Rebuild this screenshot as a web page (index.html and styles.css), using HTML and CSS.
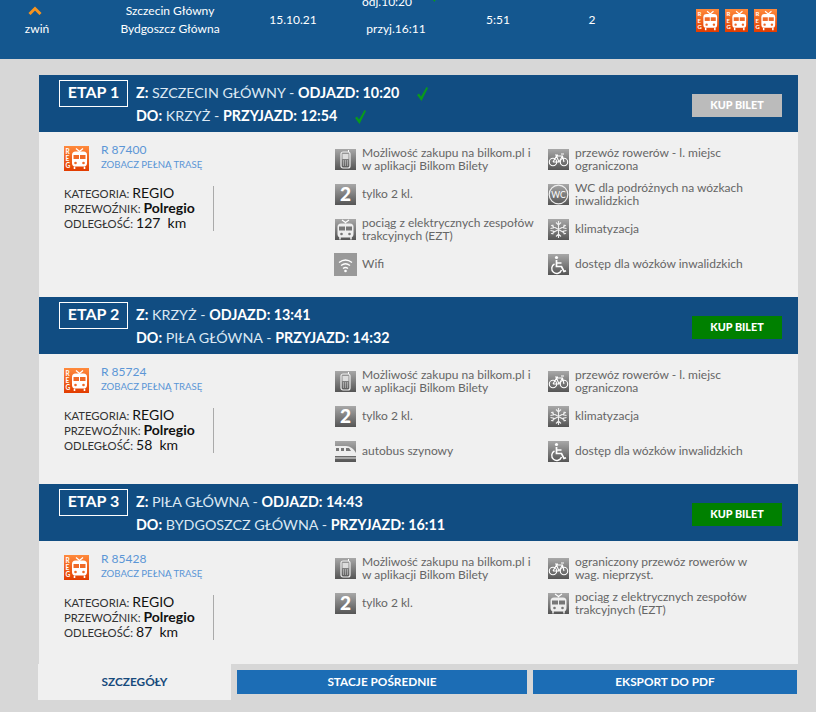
FILE: index.html
```html
<!DOCTYPE html>
<html lang="pl">
<head>
    <meta charset="UTF-8">
    <title>Szczegóły połączenia</title>
    <link rel="stylesheet" href="styles.css">
</head>
<body>
    <!-- shared icons -->
    <svg class="icon-defs" width="0" height="0">
        <defs>
            <linearGradient id="grey" x1="0" y1="0" x2="0" y2="1">
                <stop offset="0" stop-color="#a8a8a8"/>
                <stop offset="1" stop-color="#555"/>
            </linearGradient>
            <linearGradient id="orange" x1="0" y1="0" x2="0" y2="1">
                <stop offset="0" stop-color="#ff8a3c"/>
                <stop offset="1" stop-color="#e23c00"/>
            </linearGradient>
            <symbol id="i-reg" viewBox="0 0 25 25">
                <rect width="25" height="25" fill="url(#orange)"/>
                <text x="1.500" y="8" class="reg-letter">R</text>
                <text x="1.500" y="15" class="reg-letter">E</text>
                <text x="1.500" y="22" class="reg-letter">G</text>
                <path d="M12 2.500l3.500 3 3.500-3" fill="none" stroke="#fff" stroke-width="1.300"/>
                <rect x="8" y="5.500" width="15" height="15" rx="3.500" fill="#fff"/>
                <rect x="9.500" y="9" width="5.500" height="4" fill="#f06a28"/>
                <rect x="16" y="9" width="5.500" height="4" fill="#f06a28"/>
                <circle cx="11.500" cy="17" r="1.300" fill="#f06a28"/>
                <circle cx="19.500" cy="17" r="1.300" fill="#f06a28"/>
                <path d="M10.500 20.500v2.500M20.500 20.500v2.500" stroke="#fff" stroke-width="1.600"/>
            </symbol>
            <symbol id="i-phone" viewBox="0 0 21 21">
                <rect width="21" height="21" fill="url(#grey)"/>
                <path d="M13.500 1v2" stroke="#fff" stroke-width="1"/>
                <rect x="6" y="3" width="9" height="16" rx="2" fill="none" stroke="#eee" stroke-width="1.200"/>
                <rect x="7.500" y="5" width="6" height="5" fill="#ddd"/>
                <path d="M8 12h5M8 14h5M8 16h5" stroke="#ddd" stroke-width="1" stroke-dasharray="1 1"/>
            </symbol>
            <symbol id="i-two" viewBox="0 0 21 21">
                <rect width="21" height="21" fill="url(#grey)"/>
                <text x="10.500" y="17" class="two-digit">2</text>
            </symbol>
            <symbol id="i-ezt" viewBox="0 0 21 21">
                <rect width="21" height="21" fill="url(#grey)"/>
                <path d="M7 1l3.500 2.500L14 1M10.500 3.500v1" fill="none" stroke="#fff" stroke-width="1.100"/>
                <rect x="2.500" y="4.500" width="16" height="14" rx="3.500" fill="#eee"/>
                <rect x="4" y="7.500" width="6" height="4" fill="#777"/>
                <rect x="11" y="7.500" width="6" height="4" fill="#777"/>
                <circle cx="6.500" cy="15" r="1.300" fill="#777"/>
                <circle cx="14.500" cy="15" r="1.300" fill="#777"/>
                <path d="M5 18v2.500M16 18v2.500" stroke="#eee" stroke-width="1.500"/>
            </symbol>
            <symbol id="i-wifi" viewBox="0 0 23 23">
                <rect width="23" height="23" fill="#999"/>
                <path d="M5 9.500q6.500-5 13 0M7 12.500q4.500-3.500 9 0M9 15.500q2.500-2 5 0" fill="none" stroke="#fff" stroke-width="1.300"/>
                <circle cx="11.500" cy="18" r="1.300" fill="#fff"/>
            </symbol>
            <symbol id="i-bike" viewBox="0 0 21 21">
                <rect width="21" height="21" fill="url(#grey)"/>
                <circle cx="5" cy="13" r="3.700" fill="none" stroke="#fff" stroke-width="1.100"/>
                <circle cx="16" cy="13" r="3.700" fill="none" stroke="#fff" stroke-width="1.100"/>
                <path d="M5 13l3.500-6h6L16 13M8.500 7l2.500 6H5M14.500 7L11 13M7 6h3M13 5h3" fill="none" stroke="#fff" stroke-width="1.100"/>
            </symbol>
            <symbol id="i-wc" viewBox="0 0 21 21">
                <rect width="21" height="21" fill="url(#grey)"/>
                <circle cx="10.500" cy="10.500" r="9.300" fill="none" stroke="#eee" stroke-width="1.200"/>
                <text x="10.500" y="13.500" class="wc-text">WC</text>
            </symbol>
            <symbol id="i-snow" viewBox="0 0 21 21">
                <rect width="21" height="21" fill="url(#grey)"/>
                <path d="M10.500 2v17M3.100 6.200l14.800 8.600M3.100 14.800l14.800-8.600M8 3.500l2.500 2.500L13 3.500M8 17.500l2.500-2.500 2.500 2.500M2.500 9.500l3.200-.7-1-3.200M18.500 11.500l-3.200.7 1 3.200M2.500 11.500l3.200.7-1 3.200M18.500 9.500l-3.200-.7 1-3.200" fill="none" stroke="#eee" stroke-width="1.100"/>
            </symbol>
            <symbol id="i-chair" viewBox="0 0 21 21">
                <rect width="21" height="21" fill="url(#grey)"/>
                <circle cx="8.500" cy="3.500" r="1.600" fill="#fff"/>
                <path d="M8.500 6v6.500h5l2.500 5 2-.8M8.500 9h5" fill="none" stroke="#fff" stroke-width="1.700"/>
                <path d="M6.500 10a5 5 0 1 0 7 6" fill="none" stroke="#fff" stroke-width="1.400"/>
            </symbol>
            <symbol id="i-bus" viewBox="0 0 21 21">
                <rect width="21" height="21" fill="url(#grey)"/>
                <path d="M0 5h11c4 0 8 3 10 7v3H0z" fill="#eee"/>
                <path d="M1 7h3v3H1zM6 7h3v3H6zM11 7h3l2 3h-5z" fill="#777"/>
                <path d="M0 17h21" stroke="#eee" stroke-width="1"/>
            </symbol>
            <symbol id="i-check" viewBox="0 0 11 14">
                <path d="M0 8l2-1.500 2 3L9.500 0 11 1 4.500 14z" fill="#0a9a1c"/>
            </symbol>
        </defs>
    </svg>

    <div class="summary">
        <div class="toggle">
            <svg class="chevron" viewBox="0 0 14 9"><path d="M1.500 8L7 2.500 12.500 8" fill="none" stroke="#f7931e" stroke-width="3"/></svg>
            <span>zwiń</span>
        </div>
        <div class="stations">
            <div>Szczecin Główny</div>
            <div>Bydgoszcz Główna</div>
        </div>
        <div class="cell">15.10.21</div>
        <div class="times">
            <div class="dep">odj.10:20<svg class="check top-check"><use href="#i-check"/></svg></div>
            <div class="arr">przyj.16:11</div>
        </div>
        <div class="cell">5:51</div>
        <div class="cell">2</div>
        <div class="trains">
            <svg class="train-small"><use href="#i-reg"/></svg>
            <svg class="train-small"><use href="#i-reg"/></svg>
            <svg class="train-small"><use href="#i-reg"/></svg>
        </div>
    </div>

    <div class="panel">
        <section>
            <div class="leg-head">
                <div class="leg-no">ETAP 1</div>
                <div class="route">
                    <div><b>Z:</b> SZCZECIN GŁÓWNY - <b>ODJAZD: 10:20</b><svg class="check"><use href="#i-check"/></svg></div>
                    <div><b>DO:</b> KRZYŻ - <b>PRZYJAZD: 12:54</b><svg class="check"><use href="#i-check"/></svg></div>
                </div>
                <a class="buy buy-off">KUP BILET</a>
            </div>
            <div class="leg-body">
                <div class="leg-info">
                    <div class="train-line">
                        <svg class="train-icon"><use href="#i-reg"/></svg>
                        <div class="train-text">
                            <div class="train-no">R 87400</div>
                            <div class="train-link">ZOBACZ PEŁNĄ TRASĘ</div>
                        </div>
                    </div>
                    <div class="stats">
                        <div>KATEGORIA: <span class="val">REGIO</span></div>
                        <div>PRZEWOŹNIK: <span class="val"><b>Polregio</b></span></div>
                        <div>ODLEGŁOŚĆ: <span class="val">127&nbsp; km</span></div>
                    </div>
                </div>
                <div class="features">
                    <div class="feature"><svg class="ficon"><use href="#i-phone"/></svg><span>Możliwość zakupu na bilkom.pl i w aplikacji Bilkom Bilety</span></div>
                    <div class="feature"><svg class="ficon"><use href="#i-bike"/></svg><span>przewóz rowerów - l. miejsc ograniczona</span></div>
                    <div class="feature"><svg class="ficon"><use href="#i-two"/></svg><span>tylko 2 kl.</span></div>
                    <div class="feature"><svg class="ficon"><use href="#i-wc"/></svg><span>WC dla podróżnych na wózkach inwalidzkich</span></div>
                    <div class="feature"><svg class="ficon"><use href="#i-ezt"/></svg><span>pociąg z elektrycznych zespołów trakcyjnych (EZT)</span></div>
                    <div class="feature"><svg class="ficon"><use href="#i-snow"/></svg><span>klimatyzacja</span></div>
                    <div class="feature"><svg class="ficon ficon-wide"><use href="#i-wifi"/></svg><span>Wifi</span></div>
                    <div class="feature"><svg class="ficon"><use href="#i-chair"/></svg><span>dostęp dla wózków inwalidzkich</span></div>
                </div>
            </div>
        </section>

        <section>
            <div class="leg-head">
                <div class="leg-no">ETAP 2</div>
                <div class="route">
                    <div><b>Z:</b> KRZYŻ - <b>ODJAZD: 13:41</b></div>
                    <div><b>DO:</b> PIŁA GŁÓWNA - <b>PRZYJAZD: 14:32</b></div>
                </div>
                <a class="buy">KUP BILET</a>
            </div>
            <div class="leg-body">
                <div class="leg-info">
                    <div class="train-line">
                        <svg class="train-icon"><use href="#i-reg"/></svg>
                        <div class="train-text">
                            <div class="train-no">R 85724</div>
                            <div class="train-link">ZOBACZ PEŁNĄ TRASĘ</div>
                        </div>
                    </div>
                    <div class="stats">
                        <div>KATEGORIA: <span class="val">REGIO</span></div>
                        <div>PRZEWOŹNIK: <span class="val"><b>Polregio</b></span></div>
                        <div>ODLEGŁOŚĆ: <span class="val">58&nbsp; km</span></div>
                    </div>
                </div>
                <div class="features">
                    <div class="feature"><svg class="ficon"><use href="#i-phone"/></svg><span>Możliwość zakupu na bilkom.pl i w aplikacji Bilkom Bilety</span></div>
                    <div class="feature"><svg class="ficon"><use href="#i-bike"/></svg><span>przewóz rowerów - l. miejsc ograniczona</span></div>
                    <div class="feature"><svg class="ficon"><use href="#i-two"/></svg><span>tylko 2 kl.</span></div>
                    <div class="feature"><svg class="ficon"><use href="#i-snow"/></svg><span>klimatyzacja</span></div>
                    <div class="feature"><svg class="ficon"><use href="#i-bus"/></svg><span>autobus szynowy</span></div>
                    <div class="feature"><svg class="ficon"><use href="#i-chair"/></svg><span>dostęp dla wózków inwalidzkich</span></div>
                </div>
            </div>
        </section>

        <section>
            <div class="leg-head">
                <div class="leg-no">ETAP 3</div>
                <div class="route">
                    <div><b>Z:</b> PIŁA GŁÓWNA - <b>ODJAZD: 14:43</b></div>
                    <div><b>DO:</b> BYDGOSZCZ GŁÓWNA - <b>PRZYJAZD: 16:11</b></div>
                </div>
                <a class="buy">KUP BILET</a>
            </div>
            <div class="leg-body">
                <div class="leg-info">
                    <div class="train-line">
                        <svg class="train-icon"><use href="#i-reg"/></svg>
                        <div class="train-text">
                            <div class="train-no">R 85428</div>
                            <div class="train-link">ZOBACZ PEŁNĄ TRASĘ</div>
                        </div>
                    </div>
                    <div class="stats">
                        <div>KATEGORIA: <span class="val">REGIO</span></div>
                        <div>PRZEWOŹNIK: <span class="val"><b>Polregio</b></span></div>
                        <div>ODLEGŁOŚĆ: <span class="val">87&nbsp; km</span></div>
                    </div>
                </div>
                <div class="features">
                    <div class="feature"><svg class="ficon"><use href="#i-phone"/></svg><span>Możliwość zakupu na bilkom.pl i w aplikacji Bilkom Bilety</span></div>
                    <div class="feature"><svg class="ficon"><use href="#i-bike"/></svg><span>ograniczony przewóz rowerów w wag. nieprzyst.</span></div>
                    <div class="feature"><svg class="ficon"><use href="#i-two"/></svg><span>tylko 2 kl.</span></div>
                    <div class="feature"><svg class="ficon"><use href="#i-ezt"/></svg><span>pociąg z elektrycznych zespołów trakcyjnych (EZT)</span></div>
                </div>
            </div>
        </section>
    </div>

    <div class="tabs">
        <div class="tab tab-active">SZCZEGÓŁY</div>
        <div class="tab tab-mid">STACJE POŚREDNIE</div>
        <div class="tab tab-last">EKSPORT DO PDF</div>
    </div>
</body>
</html>
```

FILE: styles.css
```css
body {
    margin: 0;
    height: 712px;
    overflow: hidden;
    background-color: #d7d7d7;
    font-family: 'Lato', sans-serif;
    color: #111;
}

.icon-defs {
    display: block;
    height: 0;
}

.reg-letter {
    font-family: 'Lato', sans-serif;
    font-size: 6.5px;
    font-weight: bold;
    fill: #fff;
}

.two-digit {
    font-family: 'Lato', sans-serif;
    font-size: 19px;
    font-weight: 900;
    fill: #fff;
    text-anchor: middle;
}

.wc-text {
    font-family: 'Lato', sans-serif;
    font-size: 8.5px;
    fill: #fff;
    text-anchor: middle;
}

/* top band */
.summary {
    display: grid;
    grid-template-columns: 74px 192px 54px 138px 80px 108px 170px;
    height: 59px;
    overflow: hidden;
    background-color: #14578f;
    color: #fff;
    font-size: 12px;
    text-align: center;
}

.toggle {
    padding-top: 6px;
}

.toggle span {
    display: block;
    margin-top: 6px;
}

.chevron {
    display: block;
    width: 14px;
    height: 9px;
    margin: 0 auto 0 28px;
}

.stations {
    padding-top: 2px;
    line-height: 18px;
}

.cell {
    padding-top: 11px;
    line-height: 18px;
}

.times {
    margin-top: -7px;
    line-height: 18px;
}

.times .dep {
    position: relative;
    margin-bottom: 9px;
    padding-right: 4px;
}

.times .arr {
    padding-left: 14px;
}

.top-check {
    position: absolute;
    margin: -5px 0 0 14px;
}

.trains {
    display: flex;
    gap: 6px;
    padding: 9px 0 0 50px;
}

.train-small {
    width: 23px;
    height: 23px;
}

/* legs */
.panel {
    width: 759px;
    margin: 16px 0 0 39px;
}

.leg-head {
    display: flex;
    align-items: flex-start;
    height: 52px;
    padding: 5px 16px 0 20px;
    background-color: #114d82;
    color: #fff;
}

.leg-no {
    width: 67px;
    height: 25px;
    border: 1px solid #fff;
    font-size: 16px;
    font-weight: bold;
    line-height: 22px;
    text-align: center;
}

.route {
    margin: 1px 0 0 8px;
    color: #dbe8f3;
    font-size: 14.300px;
    line-height: 23px;
}

.route b {
    color: #fff;
}

.check {
    width: 11px;
    height: 14px;
    margin-left: 18px;
    vertical-align: -3px;
}

.buy {
    width: 90px;
    height: 23px;
    margin: 14px 0 0 auto;
    background-color: #008000;
    color: #fff;
    font-size: 10.800px;
    font-weight: 900;
    line-height: 22px;
    text-align: center;
}

.buy-off {
    background-color: #bbb;
}

.leg-body {
    display: flex;
    padding: 10px 0 15px 25px;
    background-color: #f0f0f0;
}

.leg-info {
    width: 271px;
    min-height: 98px;
    padding-top: 4px;
    box-sizing: border-box;
}

.train-line {
    display: flex;
    gap: 12px;
}

.train-icon {
    width: 25px;
    height: 25px;
}

.train-text {
    margin-top: -4px;
}

.train-no {
    font-size: 12px;
    line-height: 15px;
    color: #5b96d6;
}

.train-link {
    font-size: 9.600px;
    line-height: 15px;
    color: #5b96d6;
}

.stats {
    width: 149px;
    height: 45px;
    margin-top: 16px;
    border-right: 1px solid #aaa;
    color: #333;
    font-size: 11.300px;
    line-height: 15px;
}

.stats div:first-child {
    margin-top: -2px;
}

.val {
    color: #111;
    font-size: 14px;
    line-height: 1;
}

.features {
    display: grid;
    grid-template-columns: 213px 213px;
    grid-auto-rows: 35px;
    align-content: start;
}

.feature {
    display: flex;
    align-items: center;
    gap: 6px;
    padding-right: 11px;
    color: #666;
    font-size: 12px;
    line-height: 13px;
}

.feature span {
    margin-top: -2px;
}

.ficon {
    flex: none;
    width: 21px;
    height: 21px;
}

.ficon-wide {
    width: 23px;
    height: 23px;
    margin: 0 -1px;
}

/* bottom tabs */
.tabs {
    display: flex;
    align-items: flex-start;
    margin-left: 38px;
}

.tab {
    font-size: 11.800px;
    font-weight: bold;
    text-align: center;
    color: #fff;
    height: 24px;
    line-height: 24px;
    margin-top: 6px;
    background-color: #1c6db5;
}

.tab-active {
    width: 193px;
    height: 36px;
    margin-top: 0;
    background-color: #f0f0f0;
    color: #174a7c;
    line-height: 36px;
}

.tab-mid {
    width: 290px;
    margin-left: 6px;
}

.tab-last {
    width: 264px;
    margin-left: 6px;
}
```
